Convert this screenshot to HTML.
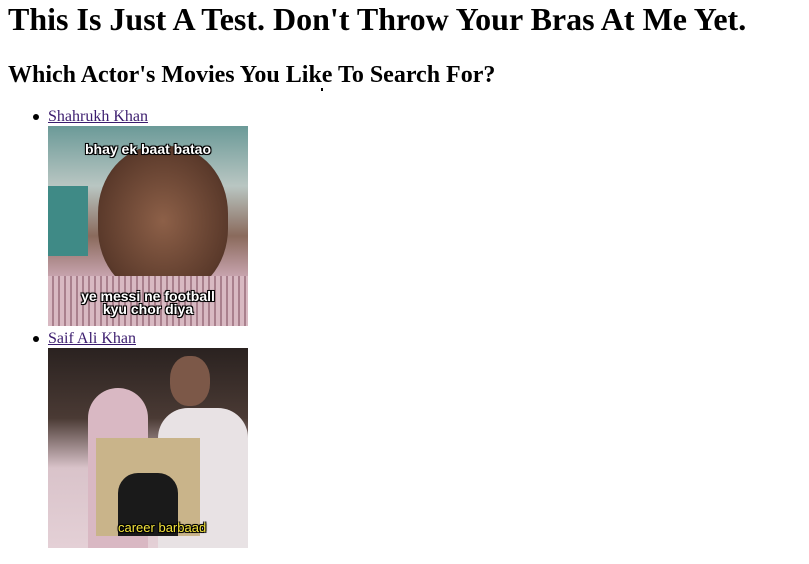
<!DOCTYPE html>
<html><head><style>
body{margin:0;width:809px;height:564px;background:#fff;font-family:"Liberation Serif",serif;position:relative;overflow:hidden}
.a{position:absolute;white-space:nowrap;color:#000}
h1,h2{margin:0}
a{color:#3b1c6e;text-decoration:underline}
.img{position:absolute;left:48px;width:200px;height:200px;overflow:hidden}
.cap{position:absolute;font-family:"Liberation Sans",sans-serif;font-weight:bold;color:#fff;text-shadow:0 0 2px #000,1px 1px 0 #000,-1px -1px 0 #000,1px -1px 0 #000,-1px 1px 0 #000;text-align:center;width:100%;left:0}
</style></head><body>
<h1 class="a" style="left:8px;top:1px;font-size:32px;line-height:37px">This Is Just A Test. Don't Throw Your Bras At Me Yet.</h1>
<h2 class="a" style="left:8px;top:61px;font-size:24px;line-height:28px">Which Actor's Movies You Like To Search For?</h2>
<div class="a" style="left:321px;top:88px;width:2px;height:3px;background:#000"></div>
<div class="a" style="left:33px;top:114px;width:6px;height:6px;border-radius:50%;background:#000"></div>
<div class="a" style="left:48px;top:107px;font-size:16px;line-height:19px"><a href="#">Shahrukh Khan</a></div>
<div class="img" style="top:126px;background:linear-gradient(180deg,#6b9a98 0%,#b9c6c2 30%,#8a6a5c 55%,#c7a3ad 75%,#b58b96 100%)">
 <div style="position:absolute;left:0;top:60px;width:40px;height:70px;background:#3f8a86"></div>
 <div style="position:absolute;left:50px;top:20px;width:130px;height:150px;border-radius:45%;background:radial-gradient(#8d6048,#5b3a2b 70%,#2b1d18)"></div>
 <div style="position:absolute;left:0;top:150px;width:200px;height:50px;background:repeating-linear-gradient(90deg,#d8b9c2 0 4px,#a9808d 4px 6px)"></div>
 <div class="cap" style="top:15px;font-size:14px">bhay ek baat batao</div>
 <div class="cap" style="top:164px;font-size:14px;line-height:13px">ye messi ne football<br>kyu chor diya</div>
</div>
<div class="a" style="left:33px;top:336px;width:6px;height:6px;border-radius:50%;background:#000"></div>
<div class="a" style="left:48px;top:329px;font-size:16px;line-height:19px"><a href="#">Saif Ali Khan</a></div>
<div class="img" style="top:348px;background:linear-gradient(180deg,#2a2220 0%,#4a3a34 35%,#d9c3ca 60%,#e4d0d6 100%)">
 <div style="position:absolute;left:40px;top:40px;width:60px;height:160px;background:#d9b8c3;border-radius:30px 30px 0 0"></div>
 <div style="position:absolute;left:110px;top:60px;width:90px;height:140px;background:#e8e2e4;border-radius:30px 30px 0 0"></div>
 <div style="position:absolute;left:122px;top:8px;width:40px;height:50px;background:#7c5848;border-radius:45%"></div>
 <div style="position:absolute;left:48px;top:90px;width:104px;height:98px;background:#c9b48a"></div>
 <div style="position:absolute;left:70px;top:125px;width:60px;height:63px;background:#1a1a1a;border-radius:20px 20px 0 0"></div>
 <div class="cap" style="top:172px;font-size:13px;color:#f2e23a;font-weight:normal;width:auto;left:70px">career barbaad</div>
</div>
</body></html>
